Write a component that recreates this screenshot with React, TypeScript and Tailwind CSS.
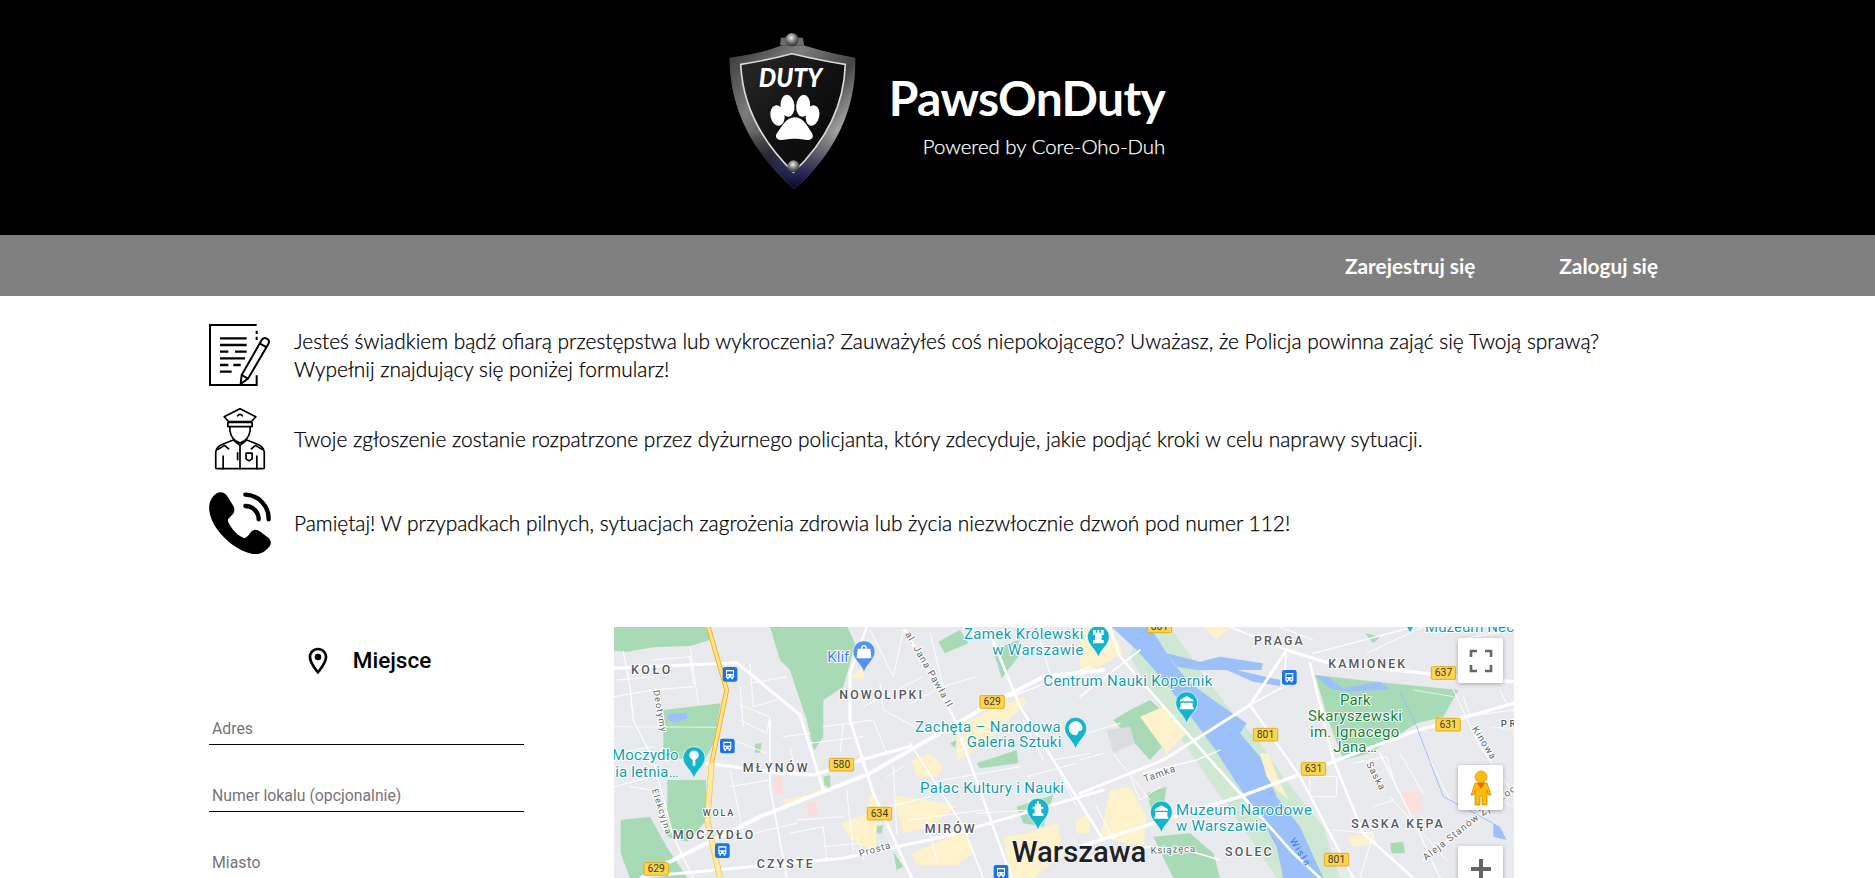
import React from 'react';

const BODY_FONT = { fontFamily: 'Lato, "Open Sans", sans-serif' };

// --- logo + ikony -----------------------------------------------------------
const Logo = () => (
  <svg className="w-[147px] h-[167px] shrink-0" viewBox="60 80 440 500">
    <defs>
      <linearGradient id="rim" x1="0" y1="0" x2="1" y2="1">
        <stop offset="0" stopColor="#333" />
        <stop offset="0.3" stopColor="#7c7c7c" />
        <stop offset="0.55" stopColor="#444" />
        <stop offset="0.8" stopColor="#c8c8c8" />
        <stop offset="1" stopColor="#4c4c4c" />
      </linearGradient>
      <linearGradient id="rimBottom" x1="0" y1="0" x2="0" y2="1">
        <stop offset="0.6" stopColor="#000" stopOpacity="0" />
        <stop offset="0.9" stopColor="#14164a" stopOpacity="0.9" />
        <stop offset="1" stopColor="#05061c" />
      </linearGradient>
      <linearGradient id="face" x1="0" y1="0" x2="1" y2="1">
        <stop offset="0" stopColor="#2a2a2a" />
        <stop offset="0.5" stopColor="#111" />
        <stop offset="1" stopColor="#060606" />
      </linearGradient>
      <radialGradient id="bolt" cx="0.45" cy="0.35" r="0.7">
        <stop offset="0" stopColor="#f0f0f0" />
        <stop offset="0.5" stopColor="#777" />
        <stop offset="1" stopColor="#222" />
      </radialGradient>
    </defs>
    <path d="M240 135 L242 112 L308 112 L312 135 Z" fill="#6d6d6d" />
    <path d="M88 172 Q190 158 245 135 L310 135 Q390 160 465 172 Q470 400 282 565 Q90 400 88 172 Z" fill="url(#rim)" />
    <path d="M88 172 Q190 158 245 135 L310 135 Q390 160 465 172 Q470 400 282 565 Q90 400 88 172 Z" fill="url(#rimBottom)" />
    <path d="M122 192 Q200 180 275 160 Q360 180 435 192 Q430 370 280 515 Q130 370 122 192 Z" fill="url(#face)" stroke="#d8d8d8" strokeWidth="5" />
    <circle cx="275" cy="118" r="20" fill="url(#bolt)" />
    <circle cx="280" cy="497" r="18" fill="url(#bolt)" />
    <text x="176" y="259" fill="#fff" fontFamily="Lato, sans-serif" fontWeight="900" fontStyle="italic" fontSize="82" textLength="190" lengthAdjust="spacingAndGlyphs">DUTY</text>
    <g fill="#fff">
      <ellipse cx="232" cy="345" rx="21" ry="31" transform="rotate(-12 232 345)" />
      <ellipse cx="262" cy="316" rx="21" ry="33" transform="rotate(-5 262 316)" />
      <ellipse cx="309" cy="316" rx="21" ry="33" transform="rotate(5 309 316)" />
      <ellipse cx="337" cy="345" rx="20" ry="31" transform="rotate(12 337 345)" />
      <path d="M284 350 C312 350 322 380 334 395 C345 412 332 422 310 417 C295 414 272 414 256 417 C234 422 220 412 232 395 C245 380 256 350 284 350 Z" />
    </g>
  </svg>
);

const FormIcon = () => (
  <svg className="w-[62px] h-[62px] shrink-0" viewBox="57 42 186 186" fill="none" stroke="#000" strokeWidth="6">
    <path d="M200 45 H60 V225 H200 V196" />
    <path d="M200 62 V72 M200 80 V90" />
    <path d="M90 85 H170 M90 105 H170 M90 125 H115 M135 125 H170 M90 145 H165 M90 165 H115 M130 165 H152 M90 185 H125" strokeWidth="7" />
    <path d="M215 90 L155 195 L152 222 L174 206 L235 102 Q241 90 229 85 Q220 81 215 90 Z" fill="#fff" />
    <path d="M155 195 L174 206 M209 100 L230 112" />
  </svg>
);

const OfficerIcon = () => (
  <svg className="w-[62px] h-[62px] shrink-0" viewBox="58 297 184 184" fill="none" stroke="#000" strokeWidth="5" strokeLinejoin="round" strokeLinecap="round">
    <path d="M103 323 L150 299 L197 323 L184 337 L116 337 Z" />
    <path d="M114 340 H186 V352 H114 Z" />
    <path d="M143 320 Q150 312 157 320" />
    <path d="M120 352 V364 Q124 392 150 401 Q176 392 180 364 V352" />
    <path d="M78 474 V428 Q80 411 100 404 L130 392 L150 408 L170 392 L200 404 Q220 411 222 428 V474 Q222 477 218 477 H82 Q78 477 78 474 Z" />
    <path d="M150 408 V477 M143 430 V450 M100 440 V477 M200 440 V477" />
    <path d="M84 420 L104 408 L116 418 M216 420 L196 408 L184 418" />
    <path d="M168 431 H186 V448 L177 454 L168 448 Z" />
  </svg>
);

const PhoneIcon = () => (
  <svg className="w-[62px] h-[62px] shrink-0" viewBox="57 548 186 186">
    <path d="M80 552 C95 545 105 550 115 565 L130 590 C138 605 130 615 118 625 C112 630 112 635 118 645 C130 665 145 680 160 685 C168 688 172 682 180 672 C188 660 198 658 212 668 L235 685 C245 695 245 705 235 715 C222 730 205 738 185 733 C130 722 65 660 58 605 C55 580 65 562 80 552 Z" />
    <path d="M166 556 A72 72 0 0 1 236 630 M166 590 A40 40 0 0 1 206 630" fill="none" stroke="#000" strokeWidth="13" strokeLinecap="round" />
  </svg>
);

const PlaceIcon = () => (
  <svg className="w-[32px] h-[32px] shrink-0" viewBox="0 0 24 24">
    <path d="M12 2C8.13 2 5 5.13 5 9c0 5.25 7 13 7 13s7-7.75 7-13c0-3.87-3.13-7-7-7zM7 9c0-2.76 2.24-5 5-5s5 2.24 5 5c0 2.88-2.88 7.19-5 9.88C9.92 16.21 7 11.85 7 9z" />
    <circle cx="12" cy="9" r="2.5" />
  </svg>
);

// --- mapa: wspolrzedne w skali 3x, dwie grupy (lewa i prawa czesc) ----------
type Label = { t: string; x: number; y: number; w: number; s?: number; r?: number };

const Poly = ({ d, fill }: { d: string; fill: string }) => <polygon points={d} fill={fill} />;
const Road = ({ d, w = 4 }: { d: string; w?: number }) => (
  <polyline points={d} fill="none" stroke="#fff" strokeWidth={w} strokeLinejoin="round" strokeLinecap="round" />
);

const MapText = ({ l, fill, weight = 400, size = 40, halo = 6 }: { l: Label; fill: string; weight?: number; size?: number; halo?: number }) => (
  <text
    x={l.x}
    y={l.y}
    fill={fill}
    fontFamily="Roboto, sans-serif"
    fontWeight={weight}
    fontSize={l.s ?? size}
    textLength={l.w}
    stroke="#fff"
    strokeWidth={halo}
    strokeLinejoin="round"
    paintOrder="stroke"
    transform={l.r ? `rotate(${l.r} ${l.x} ${l.y})` : undefined}
  >
    {l.t}
  </text>
);

const Shield = ({ x, y, n }: { x: number; y: number; n: string }) => (
  <g>
    <rect x={x} y={y} width="73" height="38" rx="3" fill="#fdd44f" stroke="#e3ad1a" strokeWidth="3" />
    <text x={x + 36.5} y={y + 29} textAnchor="middle" fontFamily="Roboto, sans-serif" fontSize="31" fill="#3c3c2c">{n}</text>
  </g>
);

const Pin = ({ x, y, color = '#12b5cb', glyph }: { x: number; y: number; color?: string; glyph: 'tree' | 'rook' | 'museum' | 'art' | 'bag' | 'palace' }) => (
  <g>
    <path d={`M${x - 33} ${y} A33 33 0 1 1 ${x + 33} ${y} C${x + 33} ${y + 25} ${x + 8} ${y + 35} ${x} ${y + 63} C${x - 8} ${y + 35} ${x - 33} ${y + 25} ${x - 33} ${y} Z`} fill={color} stroke="#fff" strokeWidth="2" />
    {glyph === 'tree' && <path d={`M${x - 4} ${y + 24} V${y + 6} A14 14 0 1 1 ${x + 4} ${y + 6} V${y + 24} Z`} fill="#fff" />}
    {glyph === 'rook' && <path d={`M${x - 16} ${y - 20} H${x - 8} V${y - 12} H${x - 3} V${y - 20} H${x + 3} V${y - 12} H${x + 8} V${y - 20} H${x + 16} V${y - 5} H${x + 10} V${y + 10} H${x + 16} V${y + 20} H${x - 16} V${y + 10} H${x - 10} V${y - 5} H${x - 16} Z`} fill="#fff" />}
    {glyph === 'museum' && <path d={`M${x - 20} ${y - 8} L${x} ${y - 20} L${x + 20} ${y - 8} V${y - 4} H${x - 20} Z M${x - 18} ${y} H${x + 18} V${y + 14} H${x + 21} V${y + 20} H${x - 21} V${y + 14} H${x - 18} Z`} fill="#fff" />}
    {glyph === 'art' && <path d={`M${x} ${y - 21} A21 21 0 1 0 ${x} ${y + 21} C${x + 8} ${y + 21} ${x + 5} ${y + 10} ${x + 11} ${y + 8} C${x + 17} ${y + 6} ${x + 21} ${y + 6} ${x + 21} ${y} A21 21 0 0 0 ${x} ${y - 21} Z`} fill="#fff" />}
    {glyph === 'bag' && <path d={`M${x - 19} ${y - 9} H${x + 19} L${x + 22} ${y + 16} Q${x + 22} ${y + 20} ${x + 18} ${y + 20} H${x - 18} Q${x - 22} ${y + 20} ${x - 22} ${y + 16} Z M${x - 9} ${y - 9} A9 11 0 0 1 ${x + 9} ${y - 9} H${x + 5} A5 7 0 0 0 ${x - 5} ${y - 9} Z`} fill="#fff" />}
    {glyph === 'palace' && <path d={`M${x - 3} ${y - 24} H${x + 3} V${y - 16} H${x + 9} V${y - 8} H${x + 16} V${y - 2} H${x + 10} V${y + 12} H${x + 16} V${y + 20} H${x - 16} V${y + 12} H${x - 10} V${y - 2} H${x - 16} V${y - 8} H${x - 9} V${y - 16} H${x - 3} Z`} fill="#fff" />}
  </g>
);

const Transit = ({ x, y }: { x: number; y: number }) => (
  <g>
    <rect x={x - 22} y={y - 22} width="44" height="44" rx="7" fill="#1a73e8" />
    <path d={`M${x - 12} ${y - 13} H${x + 12} V${y + 10} H${x + 9} V${y + 15} H${x + 4} V${y + 10} H${x - 4} V${y + 15} H${x - 9} V${y + 10} H${x - 12} Z`} fill="#fff" />
    <rect x={x - 9} y={y - 9} width="18" height="8" fill="#1a73e8" />
    <circle cx={x - 6} cy={y + 5} r="2.5" fill="#1a73e8" />
    <circle cx={x + 6} cy={y + 5} r="2.5" fill="#1a73e8" />
  </g>
);

const GREEN = '#a8dab5';
const YELLOW = '#fdf2cb';
const LIGHT = '#cfe8d4';

const leftParks = [
  '12,21 288,21 300,60 240,78 130,82 50,95 12,92',
  '480,21 712,21 735,70 720,130 700,200 640,240 640,350 612,392 590,300 570,240 540,150 510,120',
  '160,270 332,250 312,370 280,425 160,410',
  '172,480 288,480 290,600 232,665 172,650',
  '32,600 120,590 170,680 232,774 60,774 32,700',
  '985,65 1050,30 1075,70 1005,100',
  '1150,90 1225,60 1225,110 1175,175',
  '850,695 880,740 860,750',
  '785,622 820,615 815,640 790,642',
  '1220,560 1330,525 1300,620 1240,610',
  '1020,370 1040,360 1035,385',
  '1100,430 1220,390 1225,430 1110,445',
  '640,470 660,465 662,510 645,505',
  '435,372 455,368 450,398 435,398',
];
const leftYellow = [
  '690,610 770,582 780,520 800,540 800,700 740,670 710,640',
  '850,525 950,540 1040,560 960,620 880,640',
  '905,700 1000,660 1060,620 1090,700 1040,735 920,735',
  '1180,650 1250,640 1340,610 1365,700 1270,774 1200,774',
  '905,420 960,400 1000,440 980,470 920,470',
  '1040,320 1100,290 1240,230 1250,250 1100,390 1040,420',
  '1395,600 1440,580 1440,640 1400,640',
  '520,540 610,520 650,495 650,515 525,555',
  '725,170 770,130 760,180',
];
const leftRoads: [string, number][] = [
  ['12,145 380,128 570,285 640,510', 9],
  ['720,160 720,300 790,520 905,774', 9],
  ['95,774 170,730 450,590 780,460 1110,270 1300,170 1480,150', 12],
  ['290,430 520,460 610,465 770,415 900,380', 10],
  ['100,770 700,715 1000,650 1480,510', 9],
  ['885,30 1030,290 1205,774', 8],
  ['1140,40 1230,260 1480,660', 8],
  ['770,21 720,160', 8],
  ['900,370 1060,620 1120,774', 5],
  ['12,230 130,210 250,200', 3],
  ['40,95 60,200 70,300 130,420 190,650 250,774', 4],
  ['12,320 330,322', 2],
  ['240,80 265,250', 3],
  ['420,130 430,260 500,240', 3],
  ['390,255 480,290 470,340 390,300', 3],
  ['480,300 480,500 530,774', 5],
  ['520,350 600,340', 3],
  ['640,320 790,300 830,400', 3],
  ['700,310 690,400', 3],
  ['360,355 470,400', 3],
  ['360,500 480,480', 3],
  ['360,450 400,640', 3],
  ['640,680 750,670 760,720', 3],
  ['710,510 730,690', 3],
  ['560,600 700,590', 3],
  ['850,440 860,640', 3],
  ['780,30 850,170 880,30', 3],
  ['760,260 940,170', 3],
  ['810,190 820,270 950,340', 3],
  ['960,40 1000,200 1100,170', 3],
  ['1200,230 1440,140', 4],
  ['1330,420 1440,400', 3],
  ['1330,420 1400,560', 3],
  ['1000,480 1230,440', 3],
  ['900,600 1120,570', 3],
  ['1100,580 1260,570', 3],
  ['60,500 120,510', 3],
  ['12,400 130,380', 3],
  ['12,500 130,470', 3],
  ['20,180 130,170', 3],
  ['130,120 240,110 250,190', 3],
  ['420,190 530,170', 3],
  ['390,200 400,320', 3],
  ['540,380 560,470', 3],
  ['600,370 760,350', 3],
  ['540,640 640,620 650,720', 3],
  ['430,640 560,610', 3],
  ['830,470 880,440', 3],
  ['840,560 960,530', 3],
  ['950,600 980,720', 3],
  ['1250,470 1400,430', 3],
  ['1240,300 1300,420', 3],
  ['900,250 1000,200', 3],
  ['1070,60 1130,40', 3],
  ['1290,60 1320,160', 3],
];
const rightRoads: [string, number][] = [
  ['0,520 250,420 510,255 620,90', 9],
  ['90,21 120,110 400,430 640,700 720,774', 8],
  ['510,255 660,470 820,774', 7],
  ['0,680 250,600 480,530 680,455 1000,335 1302,250', 10],
  ['620,90 750,130 1130,170 1302,185', 10],
  ['620,90 610,200 510,255', 5],
  ['690,130 760,420 850,640 1000,774', 8],
  ['620,90 450,21', 5],
  ['180,90 0,230', 5],
  ['700,100 1000,21', 4],
  ['0,720 210,680 320,690 420,720', 5],
  ['190,460 350,420 420,390', 4],
  ['1120,210 1200,380 1302,520', 3],
  ['1030,720 1302,500', 5],
  ['900,400 1000,600 1080,774', 4],
  ['930,530 1100,720', 3],
  ['1150,290 1302,270', 3],
  ['1230,320 1302,330', 2],
  ['1210,520 1302,560', 2],
  ['690,470 770,470 770,530 690,530 690,470', 3],
  ['820,430 920,410 950,510', 3],
  ['960,400 1030,520', 3],
  ['1030,20 860,100', 3],
  ['150,470 180,540 240,500', 3],
  ['100,400 210,540', 3],
  ['50,560 100,660', 3],
  ['1000,210 1120,230', 2],
  ['760,630 880,640 840,774', 3],
  ['600,21 700,60', 3],
  ['1130,60 1302,30', 3],
  ['1150,230 1170,290', 3],
  ['1260,210 1280,250', 3],
  ['1050,420 1110,540', 3],
  ['880,560 940,540', 3],
  ['20,340 120,310', 3],
  ['0,420 70,400', 3],
];

const MapPanel = () => (
  <svg className="w-[900px] h-[251px] bg-[#e8eaed]" viewBox="0 0 900 251" role="img">
    {/* prawa czesc: tlo */}
    <g transform="translate(466 -7) scale(0.33333)">
      <polygon points="180,21 270,21 360,150 450,270 540,370 610,470 730,620 780,774 590,774 500,640 380,470 300,350 220,230 150,110" fill={LIGHT} />
      <polygon points="95,21 210,21 280,130 330,190 400,240 500,310 480,340 540,410 590,530 660,620 730,774 610,774 590,680 540,590 470,490 400,380 340,300 250,180 170,90" fill="#9cc0f9" />
      <polygon points="260,100 360,125 420,110 548,130 545,150 470,150 600,180 600,198 520,185 440,150 350,150 290,140" fill="#9cc0f9" />
      <polygon points="540,400 565,400 600,490 628,540 590,510 560,470" fill={YELLOW} />
      <polygon points="705,165 930,190 1135,210 1090,290 1010,310 870,400 790,420 745,300" fill={GREEN} />
      <polygon points="703,165 745,172 790,205 900,185 930,208 800,215 750,205" fill="#9cc0f9" />
      <polygon points="150,270 210,240 300,320 210,420 100,300" fill={GREEN} />
      <polygon points="180,290 250,260 320,340 260,400" fill={YELLOW} />
      <polygon points="80,330 150,320 165,370 100,400" fill="#dadce0" />
      <polygon points="90,510 150,500 200,590 190,680 60,650" fill={YELLOW} />
      <polygon points="220,650 330,640 400,700 420,774 280,774" fill={GREEN} />
      <polygon points="200,520 260,500 250,560 220,590" fill={GREEN} />
      <polygon points="0,21 90,21 130,100 0,170" fill={YELLOW} />
      <polygon points="370,21 450,21 410,60" fill={YELLOW} />
      <polygon points="965,515 1020,510 1025,575 975,575" fill="#fbe0dc" />
      <polygon points="930,670 970,665 975,700 935,700" fill={GREEN} />
      <polygon points="855,40 900,50 880,70" fill={GREEN} />
      <polygon points="1240,610 1260,620 1280,660 1240,650" fill="#9cc0f9" />
      <polygon points="800,650 880,640 890,670 820,680" fill={YELLOW} />
      {rightRoads.map(([d, w], i) => <Road key={i} d={d} w={w} />)}
      <polyline points="960,215 1010,320 1090,530 1240,610" fill="none" stroke="#9cc0f9" strokeWidth="3" />
    </g>

    {/* lewa czesc */}
    <g transform="translate(-4 -7) scale(0.33333)">
      {leftParks.map((d) => <Poly key={d} d={d} fill={GREEN} />)}
      {leftYellow.map((d) => <Poly key={d} d={d} fill={YELLOW} />)}
      <polygon points="175,282 230,278 232,295 195,308 172,300" fill="#9cc0f9" />
      <polygon points="488,470 515,470 520,520 495,520" fill="#fbdcdc" />
      <polygon points="590,550 620,545 622,590 595,590" fill="#fbdcdc" />
      {leftRoads.map(([d, w], i) => <Road key={i} d={d} w={w} />)}
      {/* trasa: gora z pomaranczowa obwodka, dol jasny */}
      <polyline points="295,21 350,210 305,430" fill="none" stroke="#f9ab00" strokeWidth="14" />
      <polyline points="295,21 350,210 305,430" fill="none" stroke="#fde293" strokeWidth="9" />
      <polyline points="305,430 292,600 330,774" fill="none" stroke="#f9c23c" strokeWidth="18" />
      <polyline points="305,430 292,600 330,774" fill="none" stroke="#fde9a8" strokeWidth="14" />
      {([
        { t: 'Deotymy', x: 130, y: 212, w: 126, s: 27, r: 80 },
        { t: 'Elekcyjna', x: 125, y: 510, w: 140, s: 27, r: 72 },
        { t: 'al. Jana Pawła II', x: 885, y: 42, w: 255, s: 29, r: 60 },
        { t: 'Prosta', x: 750, y: 711, w: 96, s: 29, r: -16 },
      ] as Label[]).map((l) => <MapText key={l.t} l={l} fill="#5f6368" />)}
      {([
        { t: 'KOŁO', x: 63, y: 162, w: 118 },
        { t: 'NOWOLIPKI', x: 688, y: 238, w: 248 },
        { t: 'MŁYNÓW', x: 398, y: 455, w: 195 },
        { t: 'WOLA', x: 278, y: 587, w: 92, s: 27 },
        { t: 'MOCZYDŁO', x: 188, y: 658, w: 242 },
        { t: 'CZYSTE', x: 440, y: 744, w: 168 },
        { t: 'MIRÓW', x: 944, y: 638, w: 150 },
      ] as Label[]).map((l) => <MapText key={l.t} l={l} fill="#55585c" weight={500} size={37} />)}
      {([
        { t: 'Zamek Królewski', x: 1062, y: 58, w: 358 },
        { t: 'w Warszawie', x: 1147, y: 105, w: 273 },
        { t: 'Centrum Nauki Kopernik', x: 1300, y: 197, w: 507 },
        { t: 'Zachęta – Narodowa', x: 915, y: 335, w: 437 },
        { t: 'Galeria Sztuki', x: 1070, y: 381, w: 284 },
        { t: 'Pałac Kultury i Nauki', x: 930, y: 518, w: 432 },
        { t: 'Moczydło', x: 6, y: 421, w: 200 },
        { t: 'ia letnia…', x: 16, y: 470, w: 190 },
      ] as Label[]).map((l) => <MapText key={l.t} l={l} fill="#129eaf" size={45} />)}
      <MapText l={{ t: 'Klif', x: 652, y: 125, w: 66 }} fill="#4285f4" size={45} />
      <Pin x={762} y={95} color="#5491f5" glyph="bag" />
      <Pin x={252} y={413} glyph="tree" />
      <Pin x={1397} y={325} glyph="art" />
      <Pin x={1284} y={568} glyph="palace" />
      <Transit x={360} y={163} />
      <Transit x={352} y={378} />
      <Transit x={337} y={692} />
      <Transit x={1173} y={757} />
      <Shield x={1110} y={227} n="629" />
      <Shield x={658} y={415} n="580" />
      <Shield x={772} y={562} n="634" />
      <Shield x={102} y={728} n="629" />
      <text x="1205" y="726" fontFamily="Roboto, sans-serif" fontWeight="500" fontSize="90" fill="#202124" stroke="#fff" strokeWidth="3" strokeLinejoin="round" paintOrder="stroke" textLength="404" lengthAdjust="spacingAndGlyphs">Warszawa</text>
    </g>

    {/* prawa czesc: opisy */}
    <g transform="translate(466 -7) scale(0.33333)">
      {([
        { t: 'PRAGA', x: 522, y: 74, w: 146 },
        { t: 'KAMIONEK', x: 745, y: 145, w: 230 },
        { t: 'SASKA KĘPA', x: 814, y: 624, w: 274 },
        { t: 'SOLEC', x: 435, y: 707, w: 140 },
        { t: 'PR', x: 1262, y: 322, w: 45, s: 29 },
      ] as Label[]).map((l) => <MapText key={l.t} l={l} fill="#55585c" weight={500} size={37} />)}
      {([
        { t: 'Książęca', x: 212, y: 702, w: 134, s: 29, r: -3 },
        { t: 'Tamka', x: 195, y: 487, w: 98, s: 29, r: -20 },
        { t: 'Saska', x: 858, y: 432, w: 90, s: 29, r: 62 },
        { t: 'Kinowa', x: 1175, y: 326, w: 110, s: 29, r: 58 },
        { t: 'Aleja Stanów Zjed…ocz', x: 1038, y: 722, w: 360, s: 29, r: -38 },
      ] as Label[]).map((l) => <MapText key={l.t} l={l} fill="#5f6368" />)}
      <MapText l={{ t: 'Wisła', x: 628, y: 662, w: 90, s: 29, r: 58 }} fill="#3b78d8" halo={0} />
      {([
        { t: 'Muzeum Narodowe', x: 288, y: 585, w: 408 },
        { t: 'w Warszawie', x: 288, y: 632, w: 272 },
        { t: 'Muzeum Nec', x: 1035, y: 36, w: 267 },
      ] as Label[]).map((l) => <MapText key={l.x} l={l} fill="#129eaf" size={45} />)}
      {([
        { t: 'Park', x: 780, y: 255, w: 92 },
        { t: 'Skaryszewski', x: 684, y: 302, w: 282 },
        { t: 'im. Ignacego', x: 690, y: 350, w: 268 },
        { t: 'Jana…', x: 760, y: 397, w: 130 },
      ] as Label[]).map((l) => <MapText key={l.t} l={l} fill="#188038" size={45} />)}
      <Pin x={55} y={50} glyph="rook" />
      <Pin x={320} y={248} glyph="museum" />
      <Pin x={244} y={576} glyph="museum" />
      <Pin x={990} y={-22} glyph="museum" />
      <Transit x={628} y={172} />
      <Shield x={202} y={0} n="801" />
      <Shield x={1054} y={140} n="637" />
      <Shield x={1068} y={295} n="631" />
      <Shield x={520} y={325} n="801" />
      <Shield x={664} y={428} n="631" />
      <Shield x={733} y={700} n="801" />
    </g>
  </svg>
);

const MapControl = ({ className, children }: { className: string; children: React.ReactNode }) => (
  <div className={`absolute left-[844px] w-[45px] h-[45px] bg-white rounded-[2px] shadow-[0_1px_4px_rgba(0,0,0,0.3)] flex items-center justify-center ${className}`}>
    {children}
  </div>
);

const rows = [
  { icon: <FormIcon />, text: 'Jesteś świadkiem bądź ofiarą przestępstwa lub wykroczenia? Zauważyłeś coś niepokojącego? Uważasz, że Policja powinna zająć się Twoją sprawą? Wypełnij znajdujący się poniżej formularz!' },
  { icon: <OfficerIcon />, text: 'Twoje zgłoszenie zostanie rozpatrzone przez dyżurnego policjanta, który zdecyduje, jakie podjąć kroki w celu naprawy sytuacji.' },
  { icon: <PhoneIcon />, text: 'Pamiętaj! W przypadkach pilnych, sytuacjach zagrożenia zdrowia lub życia niezwłocznie dzwoń pod numer 112!' },
];

const fields = ['Adres', 'Numer lokalu (opcjonalnie)', 'Miasto'];

export default function App() {
  return (
    <div className="h-[878px] overflow-hidden bg-white text-black" style={BODY_FONT}>
      {/* Header */}
      <header className="h-[235px] bg-black flex items-start justify-center pl-[10px] pt-[27px]">
        <Logo />
        <div className="ml-[22px] mt-[45px] flex flex-col items-end text-white">
          <h1 className="text-[48px] leading-[52px] font-bold tracking-[-0.7px]">PawsOnDuty</h1>
          <p className="mt-[8px] text-[20.4px] leading-[28px] font-light [-webkit-text-stroke:0.25px_white]">Powered by Core-Oho-Duh</p>
        </div>
      </header>

      {/* Nav */}
      <nav className="h-[61px] bg-[#808080] flex items-center justify-end gap-[84px] pr-[217px] text-white text-[20.8px] font-bold">
        <a>Zarejestruj się</a>
        <a>Zaloguj się</a>
      </nav>

      <main className="px-[209px]">
        <div className="pt-[28px] flex flex-col gap-[22px]">
          {rows.map((row) => (
            <div key={row.text} className="flex items-center gap-[23px]">
              {row.icon}
              <p className="text-[20.9px] leading-[28px] font-light [-webkit-text-stroke:0.25px_black]">{row.text}</p>
            </div>
          ))}
        </div>

        <section className="mt-[73px] flex gap-[90px] items-start">
          <div className="w-[315px] shrink-0 font-['Roboto',sans-serif]">
            <div className="h-[68px] mb-[15px] flex items-center justify-center gap-[19px]">
              <PlaceIcon />
              <span className="text-[22.5px] font-medium">Miejsce</span>
            </div>
            <div className="flex flex-col gap-[32px]">
              {fields.map((f) => (
                <input
                  key={f}
                  placeholder={f}
                  className="h-[35px] w-full border-b border-black px-[3px] pt-[2px] text-[15.8px] outline-none placeholder:text-[#757575]"
                />
              ))}
            </div>
          </div>

          <div className="relative w-[900px] h-[251px] shrink-0 overflow-hidden">
            <MapPanel />
            <MapControl className="top-[11px]">
              <svg className="w-[24px] h-[24px]" viewBox="0 0 24 24" fill="none" stroke="#666" strokeWidth="2.6">
                <path d="M2 8 V2 H8 M16 2 H22 V8 M22 16 V22 H16 M8 22 H2 V16" />
              </svg>
            </MapControl>
            <MapControl className="top-[138px]">
              <svg className="w-[24px] h-[36px]" viewBox="0 0 24 36">
                <circle cx="12" cy="7" r="6" fill="#fbbc04" stroke="#e09000" strokeWidth="0.6" />
                <path d="M6 13 H18 L22 25 H19 L18 20 V35 H13 V26 H11 V35 H6 V20 L5 25 H2 Z" fill="#fbbc04" stroke="#b87a00" strokeWidth="0.6" />
                <path d="M8 13 L12 19 L16 13 Z" fill="#ea6a16" />
              </svg>
            </MapControl>
            <MapControl className="top-[219px] rounded-b-none">
              <svg className="w-[24px] h-[24px]" viewBox="0 0 24 24" fill="#666">
                <path d="M10 2 H14 V10 H22 V14 H14 V22 H10 V14 H2 V10 H10 Z" />
              </svg>
            </MapControl>
          </div>
        </section>
      </main>
    </div>
  );
}
